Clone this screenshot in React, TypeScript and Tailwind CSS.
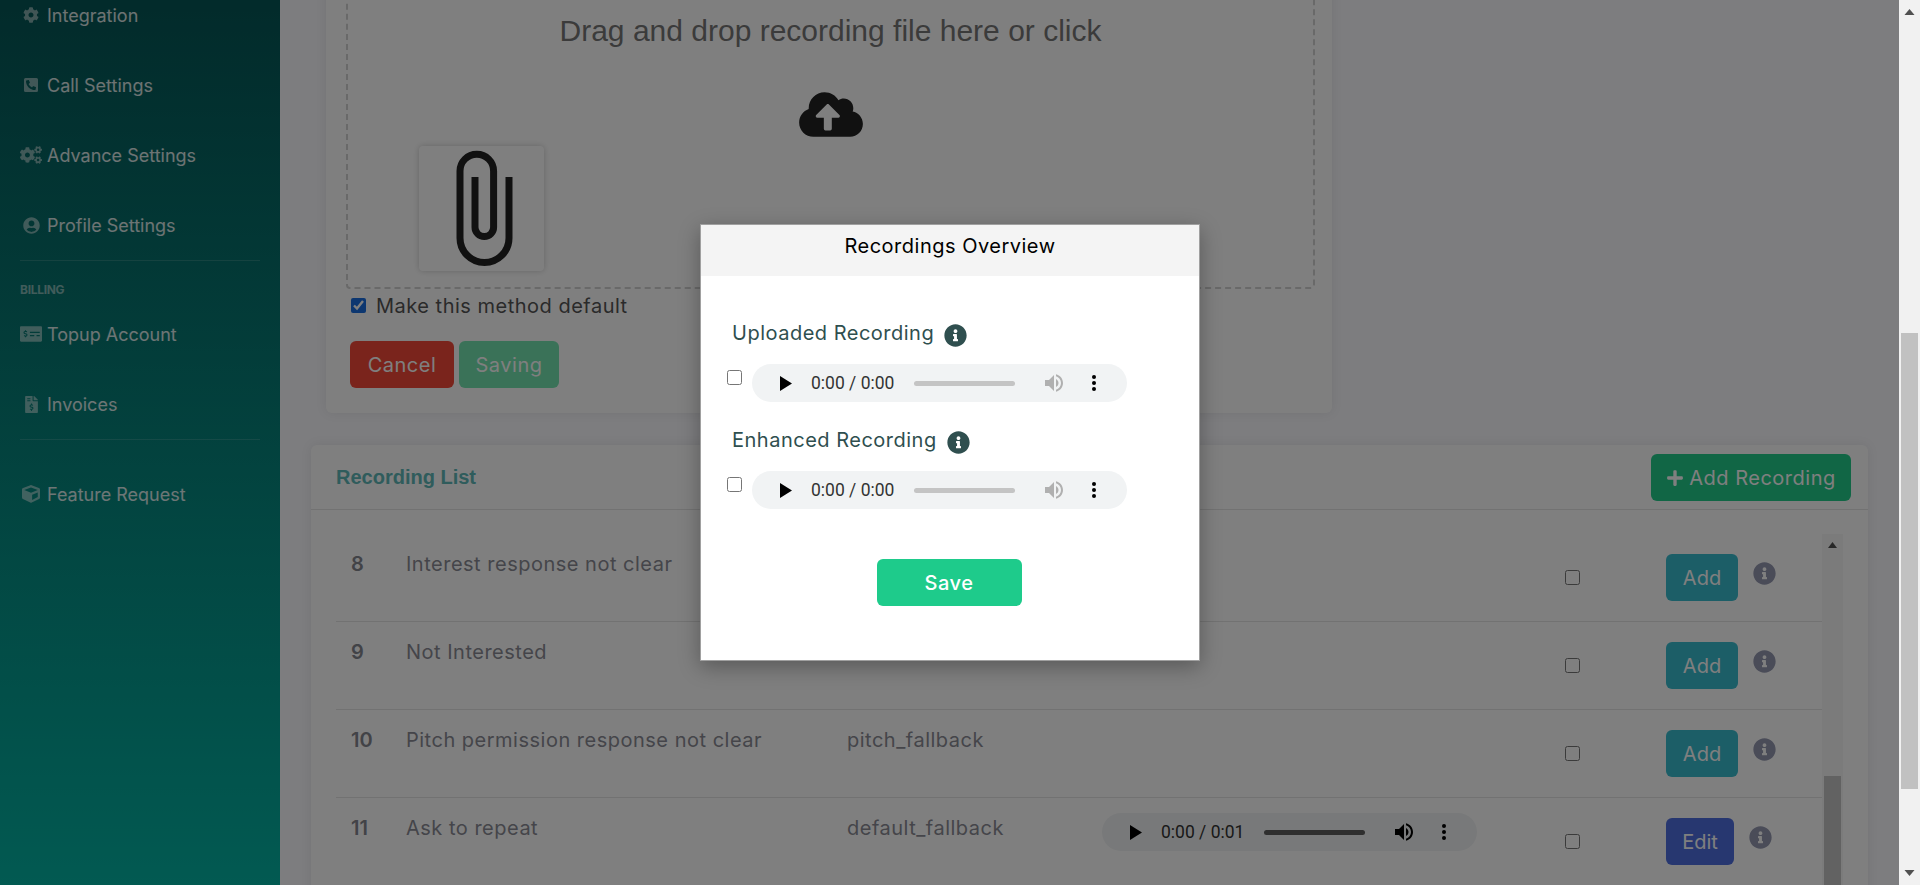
import {
  FaCloudUploadAlt,
  FaCog,
  FaCogs,
  FaCube,
  FaFileInvoiceDollar,
  FaInfoCircle,
  FaMoneyCheckAlt,
  FaPhoneSquareAlt,
  FaPlus,
  FaUserCircle,
} from "react-icons/fa";

const AudioBar = ({ time, active }: { time: string; active?: boolean }) => (
  <div className="flex h-[38px] w-[375px] shrink-0 items-center rounded-full bg-[#f1f3f4] pl-[28px]">
    <svg width="12" height="15" viewBox="0 0 12 15" className="shrink-0">
      <path d="M0 0L12 7.5L0 15Z" fill="#000" />
    </svg>
    <span className="ml-[19px] w-[82px] whitespace-nowrap font-[Roboto,sans-serif] text-[17.500px] text-[#333]">{time}</span>
    <div className={`ml-[21px] h-[5px] w-[101px] rounded-full ${active ? "bg-[#5f5f5f]" : "bg-[#c4c4c4]"}`} />
    <svg width="24" height="24" viewBox="0 0 24 24" className="ml-[27px] shrink-0" fill={active ? "#000" : "#b0b0b0"}>
      <path d="M3 9v6h4l5 5V4L7 9H3zm13.5 3c0-1.77-1.02-3.29-2.5-4.03v8.05c1.48-.73 2.5-2.25 2.5-4.02z" />
      <path d="M14 3.23v2.06c2.89.86 5 3.54 5 6.71s-2.11 5.85-5 6.71v2.06c4.01-.91 7-4.49 7-8.77s-2.99-7.86-7-8.77z" />
    </svg>
    <svg width="4" height="16" viewBox="0 0 4 16" className="ml-[26px] shrink-0" fill="#000">
      <circle cx="2" cy="2" r="2" />
      <circle cx="2" cy="8" r="2" />
      <circle cx="2" cy="14" r="2" />
    </svg>
  </div>
);

const NavItem = ({ icon, label }: { icon: React.ReactNode; label: string }) => (
  <div className="flex h-[70px] items-center pl-[20px]">
    <span className="flex w-[22px] shrink-0 justify-center text-white/50">{icon}</span>
    <span className="ml-[5px] text-[18px] text-white/85">{label}</span>
  </div>
);

const rows = [
  { n: "8", title: "Interest response not clear", key: "", action: "Add" },
  { n: "9", title: "Not Interested", key: "", action: "Add" },
  { n: "10", title: "Pitch permission response not clear", key: "pitch_fallback", action: "Add" },
  { n: "11", title: "Ask to repeat", key: "default_fallback", action: "Edit" },
];

export default function App() {
  return (
    <div className="relative flex h-[885px] w-[1920px] overflow-hidden font-[Inter,sans-serif]">
      {/* Sidebar */}
      <aside className="h-full w-[280px] shrink-0 bg-gradient-to-b from-[#055656] to-[#04b4a4]">
        <div className="-mt-[20px]">
          <NavItem icon={<FaCog size={16} />} label="Integration" />
          <NavItem icon={<FaPhoneSquareAlt size={16} />} label="Call Settings" />
          <NavItem icon={<FaCogs size={22} />} label="Advance Settings" />
          <NavItem icon={<FaUserCircle size={17} />} label="Profile Settings" />
          <div className="mx-[20px] border-t border-white/15" />
          <div className="px-[20px] pt-[20px] text-[12px] leading-[18px] font-bold tracking-[-0.3px] text-white/50">BILLING</div>
          <NavItem icon={<FaMoneyCheckAlt size={22} />} label="Topup Account" />
          <NavItem icon={<FaFileInvoiceDollar size={17} />} label="Invoices" />
          <div className="mx-[20px] border-t border-white/15" />
          <div className="mt-[19px]">
            <NavItem icon={<FaCube size={18} />} label="Feature Request" />
          </div>
        </div>
      </aside>

      {/* Main */}
      <main className="h-full w-[1619px] shrink-0 bg-[#fafafe]">
        {/* Upload card */}
        <section className="-mt-[100px] ml-[46px] h-[513px] w-[1006px] rounded-[6px] bg-white pl-[20px] shadow-[0_0_12px_rgba(0,0,0,0.08)]">
          <div className="h-[389px] w-[969px] rounded-[4px] border-2 border-dashed border-[#d2d2d2] pt-[112px]">
            <p className="text-center font-['Liberation_Sans',sans-serif] text-[30px] leading-[34px] text-[#777]">
              Drag and drop recording file here or click
            </p>
            <div className="mt-[41px] flex justify-center text-[#222]">
              <FaCloudUploadAlt size={64} className="h-[51px] w-[64px]" />
            </div>
            <div className="mt-[6px] ml-[71px] flex h-[125px] w-[125px] items-center justify-center rounded-[4px] bg-white shadow-[0_0_6px_rgba(0,0,0,0.2)]">
              <svg width="64" height="120" viewBox="453 149 64 120" fill="none" stroke="#222" strokeWidth="7" className="ml-[6px]">
                <path d="M475 177V227.300a9.300 9.300 0 0 0 18.600 0V171a16.800 16.800 0 0 0-33.600 0V238a24.500 24.500 0 0 0 49 0V177" />
              </svg>
            </div>
          </div>
          <label className="mt-[6px] ml-[5px] flex h-[20px] items-center">
            <input type="checkbox" defaultChecked className="h-[15px] w-[15px] accent-[#1a6fe0]" />
            <span className="ml-[10px] pt-[2px] text-[20px] tracking-[0.500px] text-[#555]">Make this method default</span>
          </label>
          <div className="mt-[26px] ml-[4px] flex gap-[5px]">
            <button className="h-[47px] w-[104px] rounded-[6px] bg-[#f44838] text-[20px] tracking-[0.500px] text-white">Cancel</button>
            <button className="h-[47px] w-[100px] rounded-[6px] bg-[#74e4b0] text-[20px] tracking-[0.500px] text-white">Saving</button>
          </div>
        </section>

        {/* Recording list */}
        <section className="mt-[32px] ml-[31px] w-[1557px] rounded-[6px] bg-white shadow-[0_0_12px_rgba(0,0,0,0.08)]">
          <header className="flex h-[65px] items-center justify-between border-b border-[#e4e4e4] pr-[17px] pl-[25px]">
            <h2 className="font-['Liberation_Sans',sans-serif] text-[20px] font-bold text-[#5eb8b8]">Recording List</h2>
            <button className="mt-[1px] flex h-[47px] w-[200px] items-center justify-center gap-[5px] rounded-[6px] bg-[#22cc8a] pt-[1px] text-[20px] tracking-[0.500px] text-white">
              <FaPlus size={18} />
              Add Recording
            </button>
          </header>
          <div className="flex pt-[24px] pl-[25px]">
            <div className="w-[1486px]">
              {rows.map((r) => (
                <div key={r.n} className="flex h-[88px] items-start border-b border-[#e4e4e4]">
                  <span className="mt-[16px] w-[70px] pl-[15px] text-[20px] leading-[28px] font-semibold text-[#85868e]">{r.n}</span>
                  <span className="mt-[16px] w-[441px] text-[20px] leading-[28px] tracking-[0.500px] text-[#8a8b94]">{r.title}</span>
                  <span className="mt-[16px] w-[255px] text-[20px] leading-[28px] tracking-[0.500px] text-[#8a8b94]">{r.key}</span>
                  <div className="mt-[15px] w-[463px]">{r.action === "Edit" && <AudioBar time="0:00 / 0:01" active />}</div>
                  <input type="checkbox" className="mt-[36px] h-[15px] w-[15px] shrink-0" />
                  <div className="mt-[20px] ml-[86px] flex items-start">
                    <button
                      className={`h-[47px] rounded-[6px] text-[20px] text-white ${r.action === "Edit" ? "w-[68px] bg-[#4e6ee0]" : "w-[72px] bg-[#38bccf]"}`}
                    >
                      {r.action}
                    </button>
                    <FaInfoCircle size={23} className="mt-[8px] ml-[15px] text-[#9498b0]" />
                  </div>
                </div>
              ))}
            </div>
            <div className="w-[21px] bg-[#f6f6f6] px-[2px]">
              <svg width="17" height="6" viewBox="0 0 17 6" className="mt-[8px]">
                <path d="M4 6L8.500 0L13 6Z" fill="#505050" />
              </svg>
              <div className="mt-[228px] h-[200px] w-[17px] bg-[#c4c4c4]" />
            </div>
          </div>
        </section>
      </main>

      {/* Page scrollbar */}
      <div className="h-full w-[21px] shrink-0 bg-[#f1f1f1] pt-[9px] pl-[2px]">
        <svg width="17" height="6" viewBox="0 0 17 6">
          <path d="M3.500 6L8.500 0L13.500 6Z" fill="#505050" />
        </svg>
        <div className="mt-[318px] h-[456px] w-[17px] bg-[#c1c1c1]" />
        <svg width="17" height="6" viewBox="0 0 17 6" className="mt-[81px]">
          <path d="M3.500 0L8.500 6L13.500 0Z" fill="#505050" />
        </svg>
      </div>

      {/* Modal backdrop */}
      <div className="absolute top-0 left-0 h-[885px] w-[1899px] bg-black/50" />

      {/* Modal */}
      <div className="absolute top-[224px] left-[700px] h-[437px] w-[500px] border border-[#a0a0a0] bg-white shadow-[0_6px_20px_rgba(0,0,0,0.3)]">
        <div className="flex h-[51px] items-start justify-center bg-[#f4f4f4] pt-[6px] text-[20px] tracking-[0.500px] text-black">Recordings Overview</div>
        <div className="pt-[43px]">
          <div className="ml-[31px] flex h-[28px] items-center text-[20px] tracking-[0.500px] text-[#2f4f4f]">
            <span>Uploaded Recording</span>
            <FaInfoCircle size={23} className="mt-[5px] ml-[10px]" />
          </div>
          <div className="mt-[17px] ml-[26px] flex items-start">
            <input type="checkbox" className="mt-[6px] h-[15px] w-[15px]" />
            <div className="ml-[10px]">
              <AudioBar time="0:00 / 0:00" />
            </div>
          </div>
          <div className="mt-[24px] ml-[31px] flex h-[28px] items-center text-[20px] tracking-[0.500px] text-[#2f4f4f]">
            <span>Enhanced Recording</span>
            <FaInfoCircle size={23} className="mt-[5px] ml-[10px]" />
          </div>
          <div className="mt-[17px] ml-[26px] flex items-start">
            <input type="checkbox" className="mt-[6px] h-[15px] w-[15px]" />
            <div className="ml-[10px]">
              <AudioBar time="0:00 / 0:00" />
            </div>
          </div>
          <div className="mt-[50px] flex justify-center pr-[2px]">
            <button className="h-[47px] w-[145px] rounded-[6px] bg-[#1ecb8b] text-[20px] font-medium tracking-[0.500px] text-white">Save</button>
          </div>
        </div>
      </div>
    </div>
  );
}
